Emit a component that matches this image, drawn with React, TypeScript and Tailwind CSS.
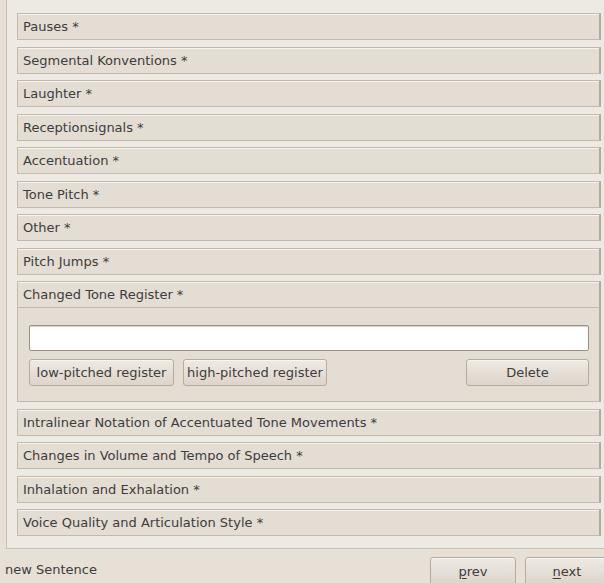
import React from "react";

const sectionsBefore = [
  "Pauses *",
  "Segmental Konventions *",
  "Laughter *",
  "Receptionsignals *",
  "Accentuation *",
  "Tone Pitch *",
  "Other *",
  "Pitch Jumps *",
];

const sectionsAfter = [
  "Intralinear Notation of Accentuated Tone Movements *",
  "Changes in Volume and Tempo of Speech *",
  "Inhalation and Exhalation *",
  "Voice Quality and Articulation Style *",
];

function Header({ label, className = "" }: { label: string; className?: string }) {
  return (
    <div
      className={
        "h-[27px] shrink-0 flex items-center pl-[5px] bg-[#e4ddd4] border border-[#c3b9ae] border-r-2 border-r-[#b5a99c] shadow-[inset_0_1px_0_#f7f4f0] text-[#3c3c3c] " +
        className
      }
    >
      {label}
    </div>
  );
}

function GtkButton({
  children,
  className = "",
}: {
  children: React.ReactNode;
  className?: string;
}) {
  return (
    <button
      className={
        "h-[27px] rounded-[3px] border border-[#b7ab9e] bg-gradient-to-b from-[#efeae4] to-[#ddd4ca] text-[#3c3c3c] shadow-[inset_0_1px_0_#f8f6f3] flex items-center justify-center " +
        className
      }
    >
      {children}
    </button>
  );
}

export default function App() {
  return (
    <div
      className="w-[604px] h-[583px] overflow-hidden bg-[#e7e0d7] flex flex-col text-[13px] leading-none"
      style={{ fontFamily: '"DejaVu Sans", "Liberation Sans", sans-serif' }}
    >
      {/* scrolled panel of collapsible sections */}
      <div className="ml-[6px] w-[598px] h-[549px] shrink-0 bg-[#ede9e3] border-l border-b border-[#c9bfb4] pl-[10px] pr-[3px] pt-[13px] flex flex-col">
        <div className="flex flex-col">
          {sectionsBefore.map((s, i) => (
            <Header
              key={s}
              label={s}
              className={i === 0 ? "" : i % 2 === 1 ? "mt-[7px]" : "mt-[6px]"}
            />
          ))}
          <div className="flex flex-col mt-[6px]">
            <Header label="Changed Tone Register *" />
            <div className="bg-[#e4ddd4] border border-t-0 border-[#c3b9ae] border-r-2 border-r-[#b5a99c] px-[11px] pt-[17px] pb-[15px] flex flex-col gap-[8px]">
              <input
                className="h-[26px] w-[560px] bg-white border border-[#9c8f82] rounded-[2px] outline-none shadow-[inset_0_1px_1px_#d8d0c6]"
                defaultValue=""
              />
              <div className="flex items-center w-[560px]">
                <GtkButton className="w-[145px]">low-pitched register</GtkButton>
                <GtkButton className="w-[144px] ml-[9px]">
                  high-pitched register
                </GtkButton>
                <GtkButton className="w-[123px] ml-auto">Delete</GtkButton>
              </div>
            </div>
          </div>
          {sectionsAfter.map((s, i) => (
            <Header
              key={s}
              label={s}
              className={i % 2 === 0 ? "mt-[7px]" : "mt-[6px]"}
            />
          ))}
        </div>
      </div>

      {/* bottom navigation row */}
      <div className="flex-1 flex items-end text-[#3c3c3c]">
        <div className="self-center pl-[5px] pt-[7px]">new Sentence</div>
        <div className="ml-auto flex gap-[9px] mb-[-3px]">
          <GtkButton className="w-[86px] h-[29px]">
            <span>
              <span className="underline underline-offset-2">p</span>rev
            </span>
          </GtkButton>
          <GtkButton className="w-[84px] h-[29px] mr-[-5px]">
            <span>
              <span className="underline underline-offset-2">n</span>ext
            </span>
          </GtkButton>
        </div>
      </div>
    </div>
  );
}
